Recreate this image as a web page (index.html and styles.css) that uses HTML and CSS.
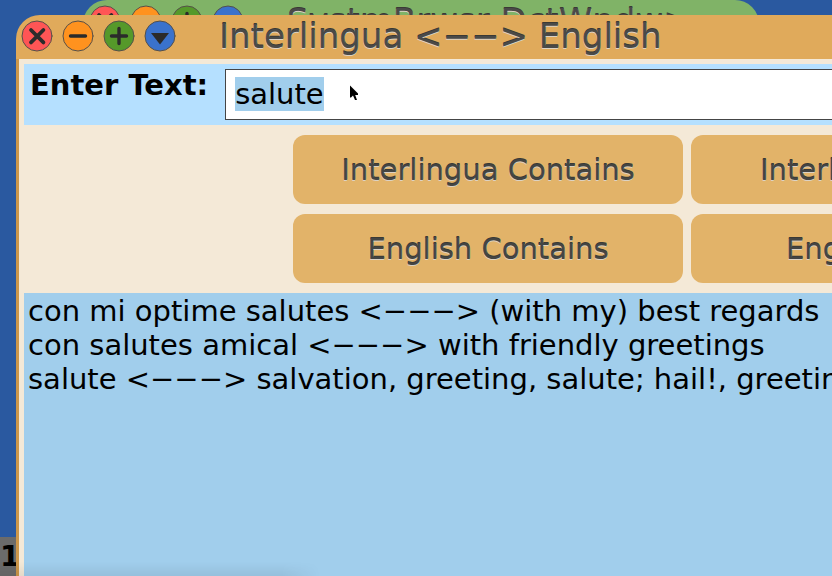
FILE: index.html
```html
<!DOCTYPE html>
<html lang="en">
<head>
<meta charset="utf-8">
<title>Interlingua - English</title>
<link rel="stylesheet" href="styles.css">
</head>
<body>
<svg class="defs" aria-hidden="true">
  <symbol id="close" viewBox="0 0 32 32"><circle cx="16" cy="16" r="15"/><path class="thick" d="M10 10 22.4 22.4M22.4 10 10 22.4"/></symbol>
  <symbol id="minimize" viewBox="0 0 32 32"><circle cx="16" cy="16" r="15"/><path d="M8.5 16H23.5"/></symbol>
  <symbol id="maximize" viewBox="0 0 32 32"><circle cx="16" cy="16" r="15"/><path d="M8.5 16H23.5M16 8.5V23.5"/></symbol>
  <symbol id="menu" viewBox="0 0 32 32"><circle cx="16" cy="16" r="15"/><path class="solid" d="M7 13H25L16 24.5Z"/></symbol>
</svg>
<div class="desktop">
  <div class="window back">
    <header class="titlebar">
      <div class="controls">
        <button class="control red" aria-label="Close browser"><svg><use href="#close"/></svg></button>
        <button class="control orange" aria-label="Minimize browser"><svg><use href="#minimize"/></svg></button>
        <button class="control green" aria-label="Maximize browser"><svg><use href="#maximize"/></svg></button>
        <button class="control blue" aria-label="Browser menu"><svg><use href="#menu"/></svg></button>
      </div>
      <h2 class="title">SystmBrwsr DctWndw&gt;</h2>
    </header>
  </div>
  <div class="task">1</div>
  <main class="window front">
    <header class="titlebar">
      <div class="controls">
        <button class="control red" aria-label="Close"><svg><use href="#close"/></svg></button>
        <button class="control orange" aria-label="Minimize"><svg><use href="#minimize"/></svg></button>
        <button class="control green" aria-label="Maximize"><svg><use href="#maximize"/></svg></button>
        <button class="control blue" aria-label="Menu"><svg><use href="#menu"/></svg></button>
      </div>
      <h1 class="title">Interlingua &lt;−−&gt; English</h1>
    </header>
    <div class="content">
      <div class="search">
        <label class="search-label" for="query">Enter Text:</label>
        <input class="search-input" id="query" type="text" value="salute" autofocus>
      </div>
      <div class="actions">
        <button class="action">Interlingua Contains</button>
        <button class="action cut">Interl</button>
        <button class="action">English Contains</button>
        <button class="action cut short">Eng</button>
      </div>
      <div class="results">
        <p>con mi optime salutes &lt;−−−&gt; (with my) best regards</p>
        <p>con salutes amical &lt;−−−&gt; with friendly greetings</p>
        <p>salute &lt;−−−&gt; salvation, greeting, salute; hail!, greetin</p>
      </div>
    </div>
  </main>
  <div class="shade"></div>
  <svg class="pointer" viewBox="0 0 10 16" aria-hidden="true"><path d="M1 0.5V12.5H2L4 10.5 6 15H8L6.2 10H9V8.6Z"/></svg>
</div>
<script src="script.js"></script>
</body>
</html>
```
FILE: styles.css
```css
* { box-sizing: border-box; }
body {
  margin: 0;
  font-family: "DejaVu Sans", sans-serif;
  font-size: 29px;
  line-height: 34px;
  color: #000;
}
button, input { font: inherit; }
h1, h2, p { margin: 0; font-weight: normal; }
.defs { display: none; }
.desktop {
  position: relative;
  display: flex;
  flex-direction: column;
  min-height: 100vh;
  padding: 15px 0 0 16px;
  overflow: hidden;
  background: #2a59a0;
}
.window { border-radius: 24px 0 0 0; }
.titlebar {
  display: flex;
  align-items: center;
  gap: 43px;
  height: 44px;
  padding: 0 0 2px 5px;
}
.back {
  position: absolute;
  top: 0;
  left: 83px;
  width: 676px;
  border-radius: 24px 24px 0 0;
  background: #80b367;
}
.back .titlebar { padding-left: 6px; }
.front {
  position: relative;
  flex: 1;
  display: flex;
  flex-direction: column;
  background: #e0aa5b;
}
.controls { display: flex; gap: 9px; }
.control {
  display: flex;
  padding: 0;
  border: 0;
  background: none;
}
.control svg {
  width: 32px;
  height: 32px;
  stroke-linecap: round;
}
symbol circle { stroke: #55504a; stroke-width: 1; }
symbol path { fill: none; stroke: #2b2b2b; stroke-width: 3.4; }
symbol .thick { stroke-width: 3.8; }
symbol .solid { fill: #2b2b2b; stroke: none; }
.red { fill: #ff5555; }
.orange { fill: #ff921e; }
.green { fill: #55992a; }
.blue { fill: #3a72cc; }
.title {
  font-size: 34px;
  line-height: 40px;
  white-space: nowrap;
  color: #4a4a48;
  text-shadow: 0 1px 0 #dcd2c4, 0 -1px 0 #3a3935;
}
.content {
  flex: 1;
  display: flex;
  flex-direction: column;
  padding: 5px 0 0 5px;
  border-left: 3px solid #cd974a;
  background: #f4e9d7;
  background-clip: padding-box;
}
.search {
  display: flex;
  padding: 5px 0 5px 6px;
  gap: 17px;
  background: #b5e0ff;
}
.search-label { font-weight: bold; line-height: 32px; white-space: nowrap; }
.search-input {
  flex: 1;
  min-width: 0;
  height: 51px;
  padding: 0 9px 2px;
  border: 1px solid #454545;
  border-right: 0;
  border-radius: 0;
  outline: 0;
  background: #fff;
}
.search-input::selection { background: #a1ceec; color: #000; }
.actions {
  display: grid;
  grid-template-columns: 390px 1fr;
  gap: 10px 8px;
  padding: 10px 0 10px 269px;
}
.action {
  height: 69px;
  padding: 0;
  border: 0;
  border-radius: 12px;
  background: #e2b369;
  color: #444543;
  text-shadow: 0 1px 0 #dcd2c4, 0 -1px 0 #3a3935;
  white-space: nowrap;
}
.cut {
  padding-left: 69px;
  border-radius: 12px 0 0 12px;
  overflow: hidden;
  text-align: left;
}
.short { padding-left: 95px; }
.results {
  flex: 1;
  padding: 1px 0 0 4px;
  overflow: hidden;
  white-space: nowrap;
  background: #a1ceec;
}
.task {
  position: absolute;
  left: 0;
  bottom: 0;
  height: 39px;
  width: 24px;
  padding-top: 2px;
  overflow: hidden;
  background: #6b6b6b;
  font-weight: bold;
}
.shade {
  position: absolute;
  left: 0;
  bottom: 0;
  width: 320px;
  height: 14px;
  background: linear-gradient(#0000, #0001);
  mask-image: linear-gradient(90deg, #000 88%, #0000);
  pointer-events: none;
}
.pointer {
  position: absolute;
  left: 349px;
  top: 85px;
  width: 10px;
  height: 16px;
  pointer-events: none;
}
```
FILE: script.js
```js
document.getElementById("query").select();
```
